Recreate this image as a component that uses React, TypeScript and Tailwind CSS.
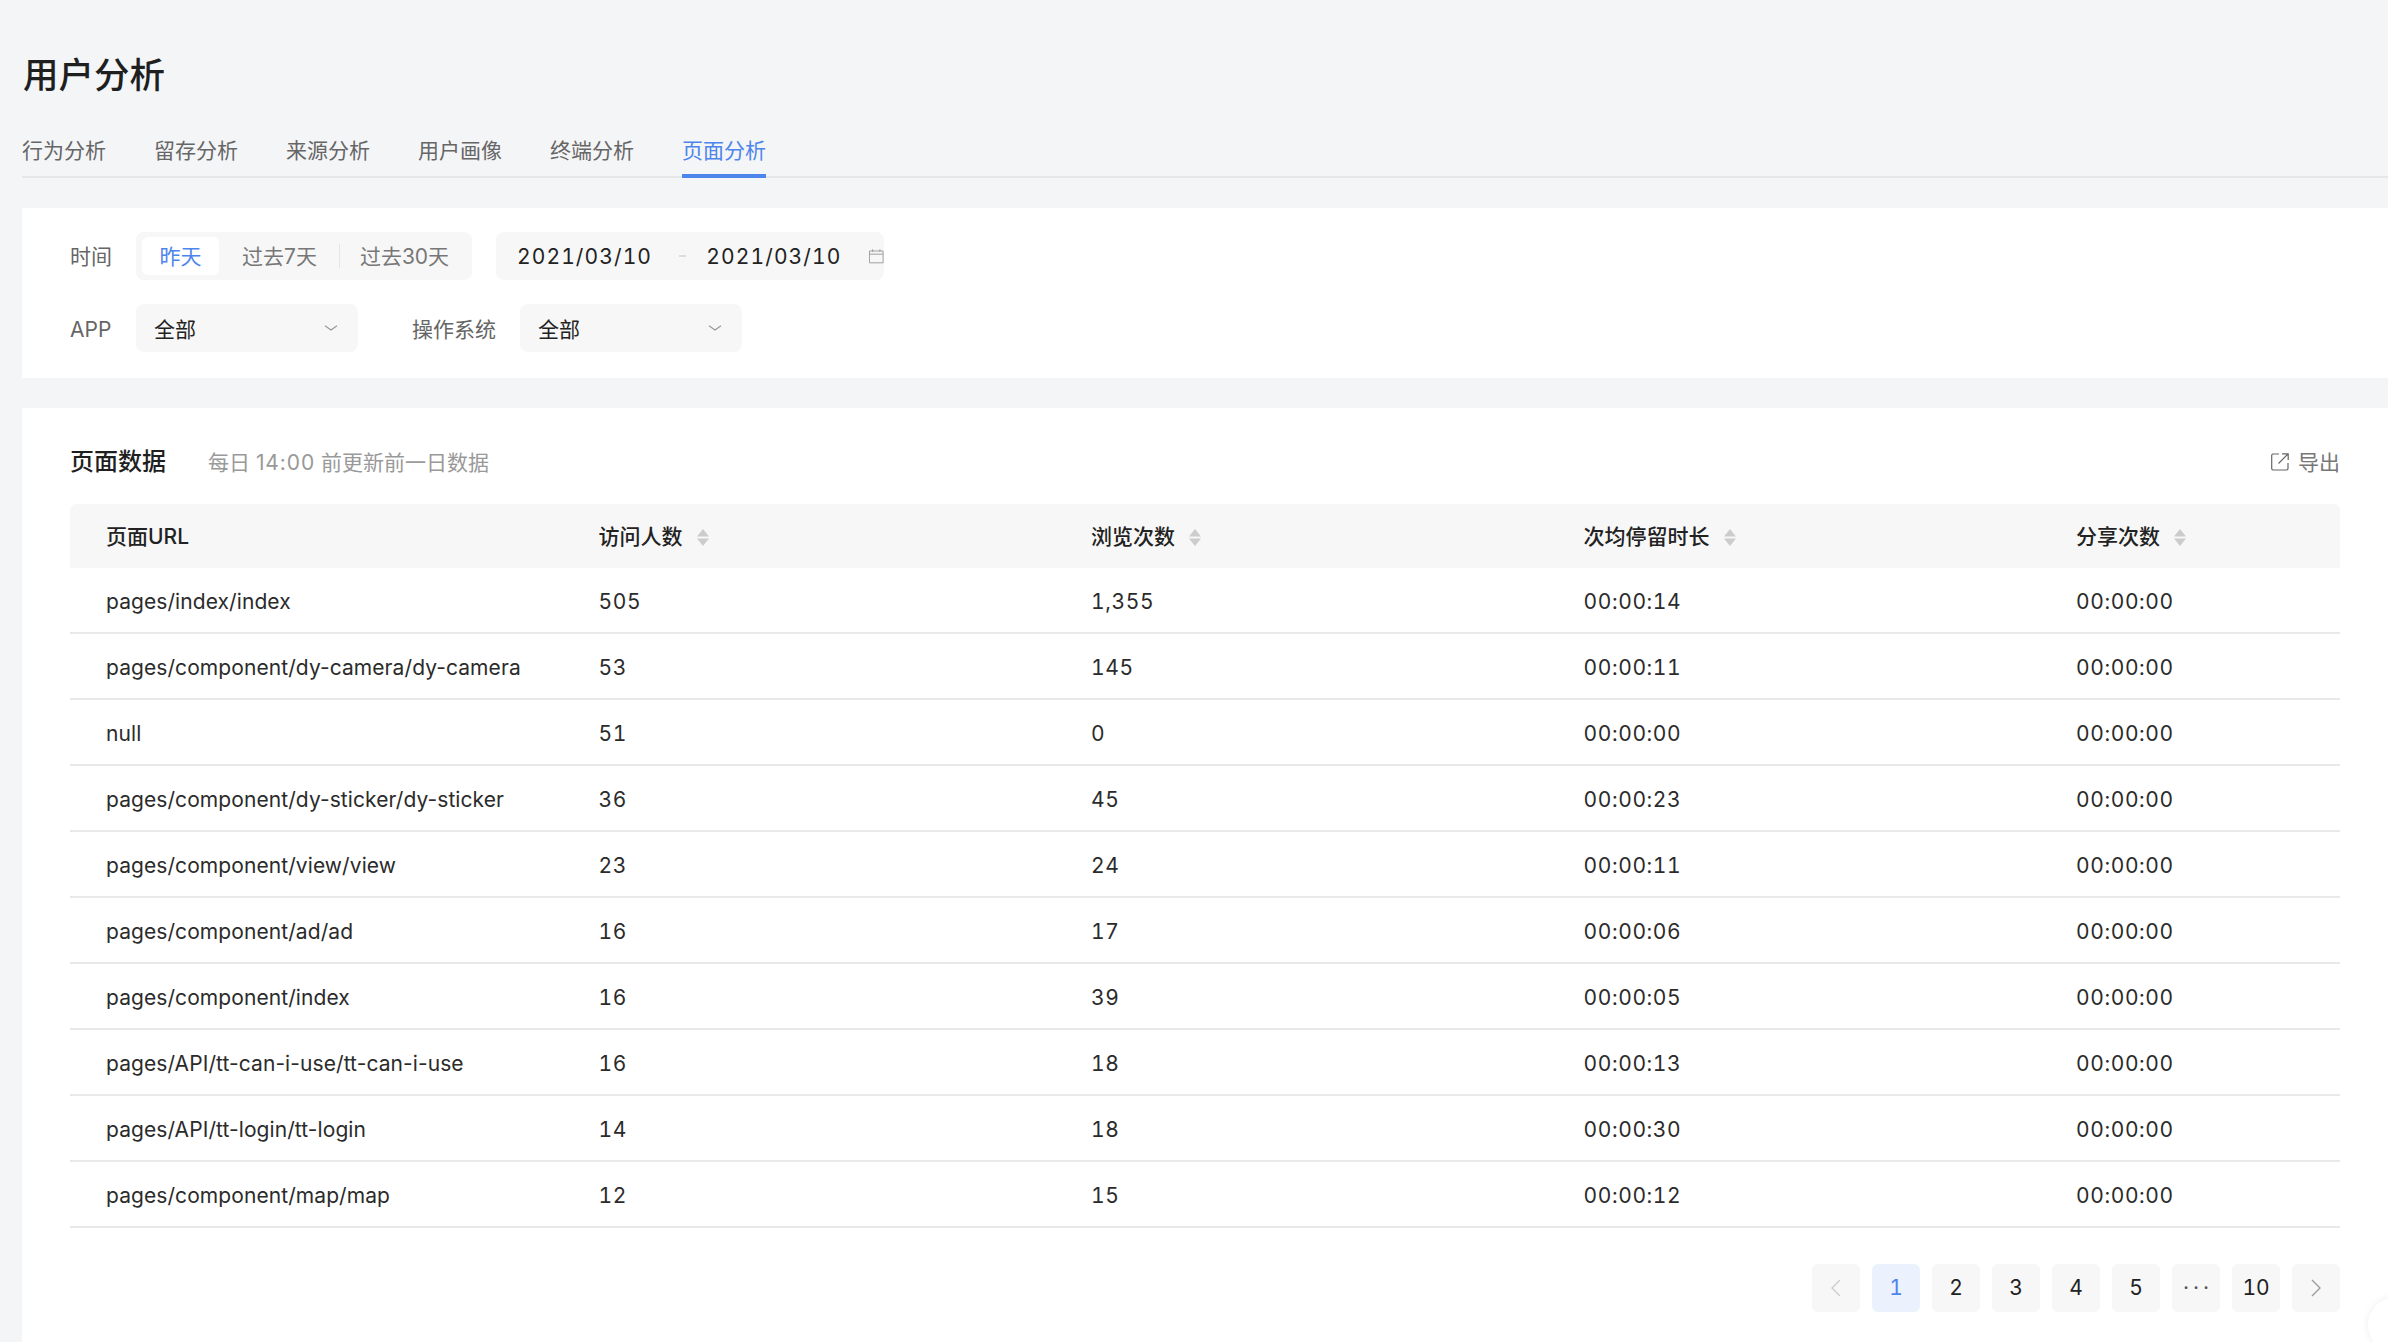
import React from 'react';

const tabs = ['行为分析', '留存分析', '来源分析', '用户画像', '终端分析', '页面分析'];

const rows = [
  ['pages/index/index', '505', '1,355', '00:00:14', '00:00:00'],
  ['pages/component/dy-camera/dy-camera', '53', '145', '00:00:11', '00:00:00'],
  ['null', '51', '0', '00:00:00', '00:00:00'],
  ['pages/component/dy-sticker/dy-sticker', '36', '45', '00:00:23', '00:00:00'],
  ['pages/component/view/view', '23', '24', '00:00:11', '00:00:00'],
  ['pages/component/ad/ad', '16', '17', '00:00:06', '00:00:00'],
  ['pages/component/index', '16', '39', '00:00:05', '00:00:00'],
  ['pages/API/tt-can-i-use/tt-can-i-use', '16', '18', '00:00:13', '00:00:00'],
  ['pages/API/tt-login/tt-login', '14', '18', '00:00:30', '00:00:00'],
  ['pages/component/map/map', '12', '15', '00:00:12', '00:00:00'],
];

const grid = 'grid grid-cols-[repeat(4,492.5px)_1fr] items-center pl-[36px]';

function Chevron() {
  return (
    <svg width="14" height="6" viewBox="0 0 14 6" fill="none" stroke="#999" strokeWidth="1.2" className="-mt-[3px]">
      <path d="M1 .8 L7 5 L13 .8" />
    </svg>
  );
}

function Sorter() {
  return (
    <svg width="12" height="17" viewBox="0 0 12 17" fill="#ccc" className="ml-[14px]">
      <path d="M6 0 L12 7.5 H0 Z" />
      <path d="M0 9.5 H12 L6 17 Z" />
    </svg>
  );
}

function Select({ width }: { width: string }) {
  return (
    <div className={`flex h-[48px] ${width} items-center justify-between rounded-[8px] bg-[#f7f7f7] pl-[18px] pr-[20px] pt-[3px] text-[#222]`}>
      <span>全部</span>
      <Chevron />
    </div>
  );
}

export default function App() {
  return (
    <div className="relative h-screen overflow-hidden bg-[#f4f5f7] pl-[22px] pt-[51px] font-['Inter','Noto_Sans_CJK_SC',sans-serif] text-[21px]">
      <h1 className="h-[50px] pl-px text-[35.5px] font-medium leading-[50px] text-[#1f1f1f]">用户分析</h1>

      <div className="mt-[21px] flex h-[56px] gap-[48px] border-b-2 border-[#e6e7e9]">
        {tabs.map((tab, i) => (
          <div
            key={tab}
            className={
              i === 5
                ? 'z-10 flex h-[56px] items-center border-b-4 border-[#4d85ec] pt-[5px] text-[#4d85ec]'
                : 'flex h-[56px] items-center border-b-4 border-transparent pt-[5px] text-[#666]'
            }
          >
            {tab}
          </div>
        ))}
      </div>

      {/* filters */}
      <div className="mt-[30px] flex h-[170px] flex-col gap-[24px] bg-white py-[24px] pl-[48px]">
        <div className="flex h-[48px] items-center">
          <span className="w-[66px] pt-[2px] text-[#666]">时间</span>
          <div className="flex h-[48px] w-[336px] items-center rounded-[8px] bg-[#f7f7f7] pl-[6px] text-[#777]">
            <div className="flex h-[38px] w-[77px] items-center justify-center rounded-[6px] bg-white pt-[2px] text-[#4d85ec]">昨天</div>
            <span className="ml-[23px] pt-[2px]">过去7天</span>
            <span className="ml-[22px] mr-[20px] h-[24px] w-px bg-[#e6e6e6]" />
            <span className="pt-[2px]">过去30天</span>
          </div>
          <div className="ml-[24px] flex h-[48px] w-[388px] items-center rounded-[8px] bg-[#f7f7f7] pl-[21px] text-[#222]">
            <span className="pt-[2px] tracking-[1.1px] tabular-nums">2021/03/10</span>
            <span className="ml-[27px] h-[2px] w-[8px] bg-[#ddd]" />
            <span className="ml-[20px] pt-[2px] tracking-[1.1px] tabular-nums">2021/03/10</span>
            <svg width="16" height="16" viewBox="0 0 16 16" fill="none" stroke="#999" strokeWidth="1" className="ml-[28px]">
              <path d="M.5 2.5 H15.5 V15.5 H.5 Z M.5 6 H15.5 M4 .5 V3.5 M12 .5 V3.5" />
            </svg>
          </div>
        </div>
        <div className="flex h-[48px] items-center">
          <span className="w-[66px] pt-[3px] text-[#666]">APP</span>
          <Select width="w-[222px]" />
          <span className="ml-[54px] w-[108px] pt-[3px] text-[#666]">操作系统</span>
          <Select width="w-[222px]" />
        </div>
      </div>

      {/* page data */}
      <div className="mt-[30px] h-[1000px] bg-white pl-[48px] pr-[48px] pt-[34px]">
        <div className="flex h-[40px] items-center">
          <h2 className="text-[24px] font-medium text-[#1f1f1f]">页面数据</h2>
          <span className="ml-[42px] pt-[2px] text-[#999]">
            每日 <span className="tracking-[0.9px]">14:00</span> 前更新前一日数据
          </span>
          <div className="ml-auto flex items-center text-[#777]">
            <svg width="18" height="18" viewBox="0 0 18 18" fill="none" stroke="#666" strokeWidth="1.2">
              <path d="M8 1 H2 A1.4 1.4 0 0 0 .7 2.4 V15.6 A1.4 1.4 0 0 0 2 17 H15.6 A1.4 1.4 0 0 0 17 15.6 V10" />
              <path d="M7.5 10.5 L17 1 M11 .8 H17.2 V7" />
            </svg>
            <span className="ml-[9px] pt-[2px]">导出</span>
          </div>
        </div>

        <div className={`${grid} mt-[22px] h-[64px] rounded-t-[6px] bg-[#f7f7f7] pt-[2px] font-medium text-[#222]`}>
          <span>页面URL</span>
          {['访问人数', '浏览次数', '次均停留时长', '分享次数'].map((head) => (
            <span key={head} className="flex items-center">
              {head}
              <Sorter />
            </span>
          ))}
        </div>

        {rows.map((row) => (
          <div key={row[0]} className={`${grid} h-[66px] border-b-2 border-[#e9e9e9] pt-[3px] text-[#2b2b2b]`}>
            {row.map((cell, i) => (
              <span key={i} className={i === 0 ? 'whitespace-nowrap tracking-[0.08px]' : 'whitespace-nowrap tracking-[0.6px] tabular-nums'}>
                {cell}
              </span>
            ))}
          </div>
        ))}

        <div className="mt-[36px] flex justify-end gap-[12px] text-[#222]">
          <div className="flex size-[48px] items-center justify-center rounded-[6px] bg-[#f7f7f7]">
            <svg width="10" height="18" viewBox="0 0 10 18" fill="none" stroke="#ccc" strokeWidth="1.3">
              <path d="M9 1 L1 9 L9 17" />
            </svg>
          </div>
          {['1', '2', '3', '4', '5', '···', '10'].map((p, i) => (
            <div
              key={p}
              className={
                i === 0
                  ? 'flex size-[48px] items-center justify-center rounded-[6px] bg-[#ebf2fe] tabular-nums text-[#4d85ec]'
                  : i === 5
                    ? 'flex size-[48px] items-center justify-center rounded-[6px] bg-[#f7f7f7] pl-[4px] tracking-[4px] text-[#555]'
                    : 'flex size-[48px] items-center justify-center rounded-[6px] bg-[#f7f7f7] tabular-nums'
              }
            >
              {p}
            </div>
          ))}
          <div className="flex size-[48px] items-center justify-center rounded-[6px] bg-[#f7f7f7]">
            <svg width="10" height="18" viewBox="0 0 10 18" fill="none" stroke="#999" strokeWidth="1.3">
              <path d="M1 1 L9 9 L1 17" />
            </svg>
          </div>
        </div>
      </div>

      {/* floating button cut off by the window corner */}
      <div className="absolute -bottom-[11px] -right-[36px] size-[56px] rounded-full bg-white shadow-[0_0_8px_rgba(0,0,0,0.07)]" />
    </div>
  );
}
